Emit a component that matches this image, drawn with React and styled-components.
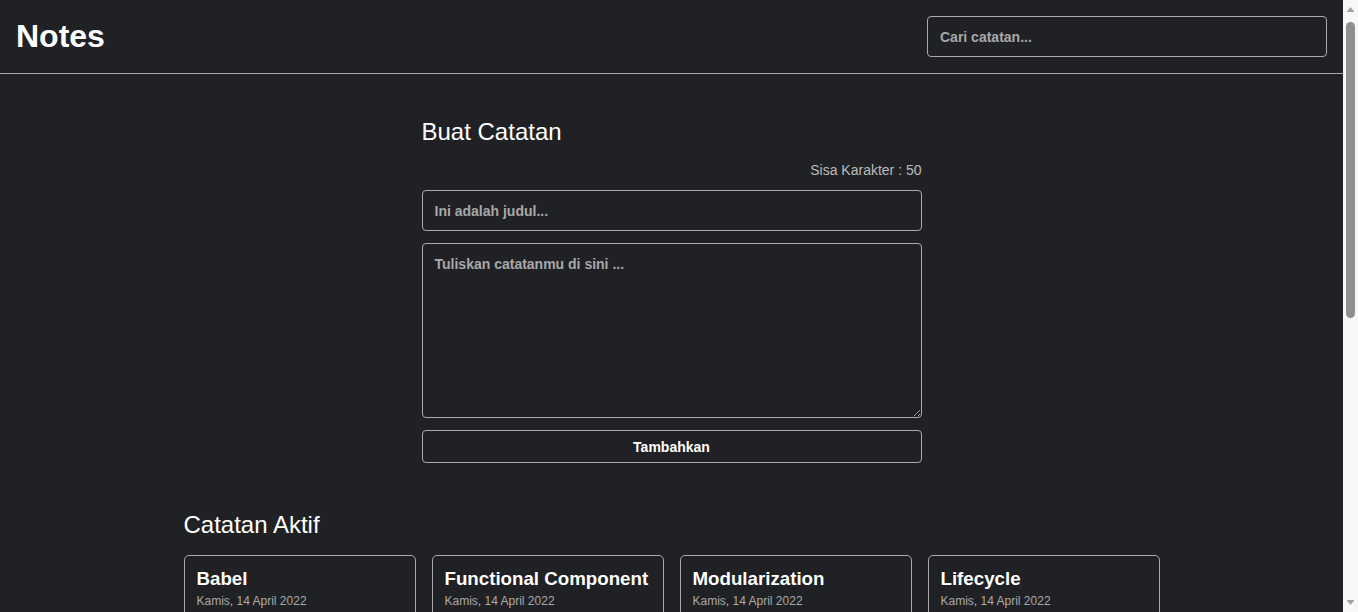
import styled, { createGlobalStyle } from 'styled-components';

const GlobalStyle = createGlobalStyle`
  * {
    box-sizing: border-box;
  }
  body {
    margin: 0;
    background: #202124;
    color: #ffffff;
    font-family: "Liberation Sans", Arial, sans-serif;
  }
  input::placeholder, textarea::placeholder {
    color: #a8a8a8;
    font-weight: bold;
  }
`;

const notes = [
  { id: 1, title: 'Babel', date: 'Kamis, 14 April 2022', body: 'Babel merupakan tools open-source yang digunakan untuk mengubah sintaks ECMAScript 2015+ menjadi sintaks yang didukung oleh JavaScript engine versi lama.' },
  { id: 2, title: 'Functional Component', date: 'Kamis, 14 April 2022', body: 'Functional component merupakan React component yang dibuat menggunakan fungsi JavaScript.' },
  { id: 3, title: 'Modularization', date: 'Kamis, 14 April 2022', body: 'Dalam konteks pemrograman JavaScript, modularization merupakan teknik dalam memecah atau menggunakan kode dalam berkas JavaScript secara terpisah berdasarkan tanggung jawabnya masing-masing.' },
  { id: 4, title: 'Lifecycle', date: 'Kamis, 14 April 2022', body: 'Dalam konteks React component, lifecycle merupakan kumpulan method yang menjadi siklus hidup mulai dari component dibuat (constructor), dicetak (render), pasca-cetak (componentDidMount), dan sebagainya.' },
];

export default function App() {
  return (
    <>
      <GlobalStyle />
      <Page>
        <Header>
          <Brand>Notes</Brand>
          <Search type="text" placeholder="Cari catatan..." />
        </Header>
        <Main>
          <FormSection>
            <SectionTitle>Buat Catatan</SectionTitle>
            <form onSubmit={(e) => e.preventDefault()}>
              <CharLimit>Sisa Karakter : 50</CharLimit>
              <Field type="text" placeholder="Ini adalah judul..." />
              <Body placeholder="Tuliskan catatanmu di sini ..." />
              <Submit type="submit">Tambahkan</Submit>
            </form>
          </FormSection>
          <SectionTitle>Catatan Aktif</SectionTitle>
          <NotesGrid>
            {notes.map((note) => (
              <Card key={note.id}>
                <CardTitle>{note.title}</CardTitle>
                <CardDate>{note.date}</CardDate>
                <CardBody>{note.body}</CardBody>
              </Card>
            ))}
          </NotesGrid>
        </Main>
      </Page>
      <ScrollTrack>
        <Arrow viewBox="0 0 15 15"><path d="M3.5 10 L7.5 5 L11.5 10 Z" fill="#a3a3a3" /></Arrow>
        <Thumb />
        <Arrow viewBox="0 0 15 15"><path d="M3.5 5 L7.5 10 L11.5 5 Z" fill="#a3a3a3" /></Arrow>
      </ScrollTrack>
    </>
  );
}

const Page = styled.div`
  margin-right: 15px;
`;

const Header = styled.header`
  display: flex;
  justify-content: space-between;
  align-items: center;
  padding: 16px 16px;
  border-bottom: 1px solid #aaaaaa;
`;

const Brand = styled.h1`
  margin: 0;
  font-size: 32px;
  font-weight: bold;
`;

const Search = styled.input`
  width: 400px;
  height: 41px;
  padding: 0 12px;
  background: transparent;
  border: 1px solid #aaaaaa;
  border-radius: 4px;
  color: #ffffff;
  font-family: inherit;
  font-size: 14px;
`;

const Main = styled.main`
  max-width: 1000px;
  margin: 0 auto;
  padding: 44px 12px;
`;

const FormSection = styled.section`
  width: 500px;
  margin: 0 auto 48px;
  form {
    display: flex;
    flex-direction: column;
  }
`;

const SectionTitle = styled.h2`
  margin: 0 0 16px;
  font-size: 24px;
  font-weight: normal;
`;

const CharLimit = styled.p`
  margin: 0 0 12px;
  text-align: right;
  font-size: 14px;
  color: #bbbbbb;
`;

const Field = styled.input`
  height: 41px;
  margin-bottom: 12px;
  padding: 0 12px;
  background: transparent;
  border: 1px solid #aaaaaa;
  border-radius: 4px;
  color: #ffffff;
  font-family: inherit;
  font-size: 14px;
`;

const Body = styled.textarea`
  height: 175px;
  margin-bottom: 12px;
  padding: 12px;
  background: transparent;
  border: 1px solid #aaaaaa;
  border-radius: 4px;
  color: #ffffff;
  font-family: inherit;
  font-size: 14px;
  resize: vertical;
`;

const Submit = styled.button`
  height: 33px;
  background: transparent;
  border: 1px solid #aaaaaa;
  border-radius: 4px;
  color: #ffffff;
  font-family: inherit;
  font-size: 14px;
  font-weight: bold;
  cursor: pointer;
`;

const NotesGrid = styled.div`
  display: grid;
  grid-template-columns: repeat(4, minmax(0, 1fr));
  gap: 16px;
`;

const Card = styled.article`
  padding: 12px 12px 16px;
  border: 1px solid #aaaaaa;
  border-radius: 5px;
`;

const CardTitle = styled.h3`
  margin: 0 0 4px;
  font-size: 1.17em;
  font-weight: bold;
`;

const CardDate = styled.p`
  margin: 0 0 8px;
  font-size: 12px;
  color: #aaaaaa;
`;

const CardBody = styled.p`
  margin: 0;
  font-size: 14px;
  line-height: 1.4;
`;

const ScrollTrack = styled.div`
  position: fixed;
  top: 0;
  right: 0;
  width: 15px;
  height: 100vh;
  background: #f8f8f8;
  display: flex;
  flex-direction: column;
  align-items: center;
`;

const Arrow = styled.svg`
  width: 15px;
  height: 15px;
  flex: none;
  margin: 2px 0;
`;

const Thumb = styled.div`
  width: 9px;
  height: 296px;
  margin-top: 3px;
  margin-bottom: auto;
  background: #8f8f8f;
  border-radius: 5px;
`;
